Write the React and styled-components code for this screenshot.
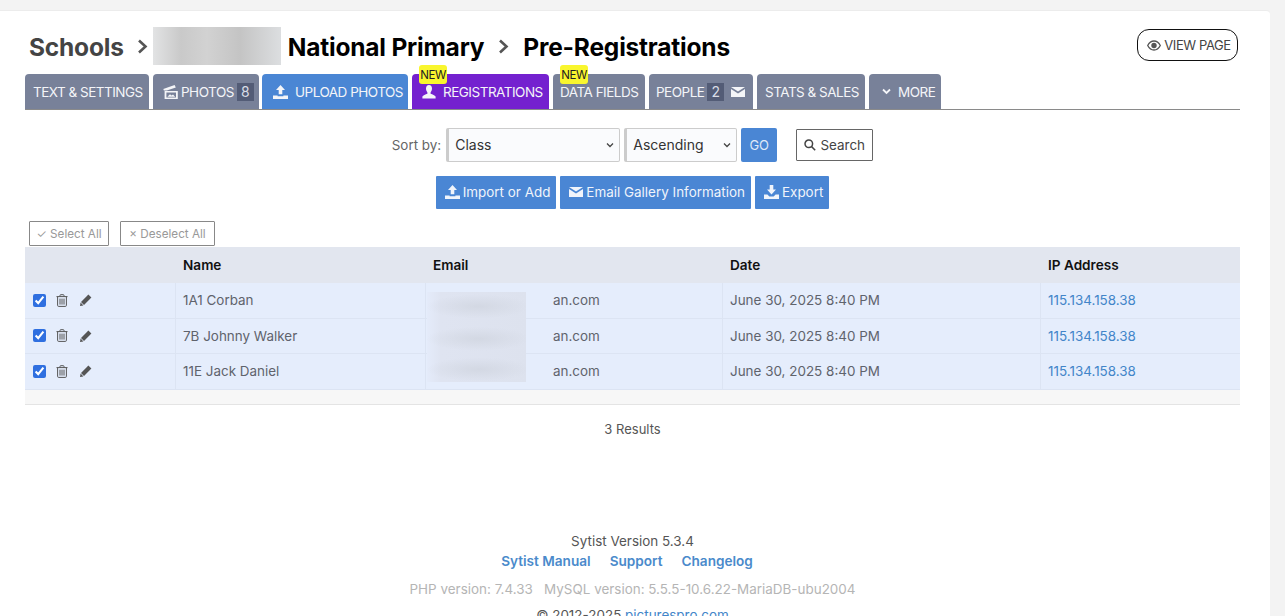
import styled, { createGlobalStyle } from 'styled-components';

const GlobalStyle = createGlobalStyle`
  html, body {
    margin: 0;
    padding: 0;
    height: 616px;
    overflow: hidden;
    background: #f3f3f3;
    font-family: Inter, "Liberation Sans", sans-serif;
    font-size: 13.45px;
    color: #555a60;
  }
`;

const UploadIcon = () => (
  <svg width="15" height="14" viewBox="0 0 15 14" fill="currentColor">
    <path d="M7.5 0 L12 5 H9.3 V9.3 H5.7 V5 H3 Z" />
    <path d="M0 10.6 H4.6 V11.2 H10.4 V10.6 H15 V14 H0 Z" />
  </svg>
);

const DownloadIcon = () => (
  <svg width="15" height="14" viewBox="0 0 15 14" fill="currentColor">
    <path d="M5.7 0 H9.3 V4.6 H12 L7.5 9.6 L3 4.6 H5.7 Z" />
    <path d="M0 9.6 H3.4 L5.4 11.4 H9.6 L11.6 9.6 H15 V14 H0 Z" />
  </svg>
);

const MailIcon = () => (
  <svg width="14" height="10" viewBox="0 0 14 10" fill="currentColor">
    <path d="M0 0 H14 L7 4.4 Z" />
    <path d="M0 2 L7 6.4 L14 2 V10 H0 Z" />
  </svg>
);

const UserIcon = () => (
  <svg width="14" height="14" viewBox="0 0 14 14" fill="currentColor">
    <path d="M7 0 C9 0 10 1.5 10 3.6 C10 5.4 9.3 6.6 8.6 7.4 V8.8 C10.5 9.6 13 10.2 13.6 11.6 V13.4 H0.4 V11.6 C1 10.2 3.5 9.6 5.4 8.8 V7.4 C4.7 6.6 4 5.4 4 3.6 C4 1.5 5 0 7 0 Z" />
  </svg>
);

const PhotosIcon = () => (
  <svg width="15" height="14" viewBox="0 0 15 14" fill="currentColor">
    <path d="M0.3 4 L11.6 0 L12.8 2.6 L3.8 5.6 H0.9 Z" />
    <path fillRule="evenodd" d="M1.6 6 H14.8 V14 H1.6 Z M3.4 7.6 V12.4 H13 V7.6 Z" />
    <path d="M4.4 11.8 L7 9.2 L8.6 10.6 L10 9.4 L12.2 11.8 Z" />
  </svg>
);

const ChevronDown = () => (
  <svg width="9" height="7" viewBox="0 0 9 7" fill="none" stroke="currentColor" strokeWidth="1.8">
    <path d="M1 1.5 L4.5 5 L8 1.5" />
  </svg>
);

const ChevronRight = () => (
  <svg width="11" height="15" viewBox="0 0 11 15" fill="none" stroke="#555" strokeWidth="2.6">
    <path d="M2 1.5 L8.5 7.5 L2 13.5" />
  </svg>
);

const EyeIcon = () => (
  <svg width="14" height="11" viewBox="0 0 14 11" fill="none" stroke="#555" strokeWidth="1.3">
    <path d="M0.7 5.5 C2.4 2.2 4.6 1 7 1 C9.4 1 11.6 2.2 13.3 5.5 C11.6 8.8 9.4 10 7 10 C4.6 10 2.4 8.8 0.7 5.5 Z" />
    <circle cx="7" cy="5.5" r="2.7" fill="#555" stroke="none" />
  </svg>
);

const SearchIcon = () => (
  <svg width="12" height="12" viewBox="0 0 12 12" fill="none" stroke="#444" strokeWidth="1.5">
    <circle cx="4.8" cy="4.8" r="3.8" />
    <path d="M7.6 7.6 L11.2 11.2" />
  </svg>
);

const TrashIcon = () => (
  <svg width="12" height="13" viewBox="0 0 12 13" fill="none" stroke="#555" strokeWidth="1">
    <path d="M0.5 2.6 H11.5" />
    <path d="M4 2.4 V1.4 Q4 0.7 4.7 0.7 H7.3 Q8 0.7 8 1.4 V2.4" />
    <path d="M1.6 2.8 V11.4 Q1.6 12.4 2.6 12.4 H9.4 Q10.4 12.4 10.4 11.4 V2.8" />
    <path d="M4 4.6 V10.6 M6 4.6 V10.6 M8 4.6 V10.6" />
  </svg>
);

const PencilIcon = () => (
  <svg width="12" height="12" viewBox="0 0 12 12" fill="#555">
    <path d="M8.4 0.6 L11.4 3.6 L4 11 L1 8 Z" />
    <path d="M0.6 8.6 L3.4 11.4 L0 12 Z" />
  </svg>
);

const tabs = [
  { label: 'TEXT & SETTINGS', width: 124, pad: 8 },
  { label: 'PHOTOS', width: 106, pad: 10, icon: <PhotosIcon />, count: 8, tight: true },
  { label: 'UPLOAD PHOTOS', width: 146, pad: 11, icon: <UploadIcon />, tone: 'blue' },
  { label: 'REGISTRATIONS', width: 137, pad: 10, icon: <UserIcon />, tone: 'purple', isNew: true },
  { label: 'DATA FIELDS', width: 92, pad: 7, isNew: true },
  { label: 'PEOPLE', width: 104, pad: 7, count: 2, after: <MailIcon /> },
  { label: 'STATS & SALES', width: 108, pad: 8 },
  { label: 'MORE', width: 72, pad: 13, icon: <ChevronDown /> },
];

const rows = [
  { name: '1A1 Corban' },
  { name: '7B Johnny Walker' },
  { name: '11E Jack Daniel' },
];

export default function App() {
  return (
    <Page>
      <GlobalStyle />
      <Card>
        <TitleRow>
          <Title>
            <Crumb>Schools</Crumb>
            <Arrow $before={13} $after={5}><ChevronRight /></Arrow>
            <Redacted />
            <TitleText>National Primary</TitleText>
            <Arrow $before={14} $after={14}><ChevronRight /></Arrow>
            <TitleText>Pre-Registrations</TitleText>
          </Title>
          <ViewPage><EyeIcon />VIEW PAGE</ViewPage>
        </TitleRow>

        <TabBar>
          {tabs.map((tab) => (
            <Tab key={tab.label} $width={tab.width} $pad={tab.pad} $tone={tab.tone} $tight={tab.tight}>
              {tab.isNew && <NewBadge>NEW</NewBadge>}
              {tab.icon}
              <TabLabel>
                {tab.label}
                {tab.count && <Count>{tab.count}</Count>}
              </TabLabel>
              {tab.after}
            </Tab>
          ))}
        </TabBar>

        <SortRow>
          <SortLabel>Sort by:</SortLabel>
          <Select $width={174} defaultValue="Class">
            <option>Class</option>
          </Select>
          <Select $width={113} defaultValue="Ascending">
            <option>Ascending</option>
          </Select>
          <GoButton>GO</GoButton>
          <SearchButton><SearchIcon />Search</SearchButton>
        </SortRow>

        <ActionRow>
          <ActionButton><UploadIcon />Import or Add</ActionButton>
          <ActionButton><MailIcon />Email Gallery Information</ActionButton>
          <ActionButton><DownloadIcon />Export</ActionButton>
        </ActionRow>

        <SelectRow>
          <SelectButton $width={80}>✓ Select All</SelectButton>
          <SelectButton $width={95}>× Deselect All</SelectButton>
        </SelectRow>

        <TableWrap>
          <Table>
            <HeadRow>
              <HeadCell />
              <HeadCell>Name</HeadCell>
              <HeadCell>Email</HeadCell>
              <HeadCell>Date</HeadCell>
              <HeadCell>IP Address</HeadCell>
            </HeadRow>
            {rows.map((row) => (
              <Row key={row.name}>
                <ToolCell>
                  <Check type="checkbox" defaultChecked />
                  <TrashIcon />
                  <PencilIcon />
                </ToolCell>
                <Cell>{row.name}</Cell>
                <EmailCell>an.com</EmailCell>
                <Cell>June 30, 2025 8:40 PM</Cell>
                <Cell><Link>115.134.158.38</Link></Cell>
              </Row>
            ))}
          </Table>
          <BlurOverlay />
        </TableWrap>
        <TableFoot />

        <Results>3 Results</Results>

        <Footer>
          <div>Sytist Version 5.3.4</div>
          <FooterLinks>
            <FooterLink>Sytist Manual</FooterLink>
            <FooterLink>Support</FooterLink>
            <FooterLink>Changelog</FooterLink>
          </FooterLinks>
          <Versions>PHP version: 7.4.33 &nbsp; MySQL version: 5.5.5-10.6.22-MariaDB-ubu2004</Versions>
          <Copyright>© 2012-2025 <Link>picturespro.com</Link></Copyright>
        </Footer>
      </Card>
    </Page>
  );
}

const Page = styled.div`
  padding: 10px 15px 0 0;
  height: 606px;
  overflow: hidden;
`;

const Card = styled.div`
  background: #ffffff;
  border-top: 1px solid #ececec;
  border-top-right-radius: 4px;
  padding: 0 30px 40px 25px;
  min-height: 640px;
`;

const TitleRow = styled.div`
  display: flex;
  justify-content: space-between;
  align-items: flex-start;
  height: 63px;
  padding-top: 16px;
  box-sizing: border-box;
`;

const Title = styled.h1`
  display: flex;
  align-items: center;
  margin: 0 0 0 4px;
  height: 38px;
  font-size: 24.5px;
  font-weight: 700;
  letter-spacing: -0.2px;
  color: #000;
`;

const TitleText = styled.span`
  padding-top: 1px;
`;

const Crumb = styled(TitleText)`
  color: #444;
`;

const Arrow = styled.span`
  display: flex;
  margin: 1px ${(p) => p.$after}px 0 ${(p) => p.$before}px;
`;

const Redacted = styled.div`
  width: 128px;
  height: 38px;
  margin-right: 7px;
  background: linear-gradient(90deg, #e2e3e4 0%, #c9c9c9 22%, #d2d2d2 42%, #c4c4c4 68%, #dcdee0 100%);
`;

const ViewPage = styled.button`
  display: flex;
  align-items: center;
  justify-content: center;
  gap: 3px;
  width: 101px;
  height: 32px;
  margin: 2px 2px 0 0;
  padding: 0 0 0 3px;
  background: #fff;
  border: 1px solid #111;
  border-radius: 12px;
  font: 13px Inter, sans-serif;
  letter-spacing: -0.4px;
  color: #444;
`;

const TabBar = styled.div`
  display: flex;
  gap: 4px;
  height: 35px;
  border-bottom: 1px solid #8a8a8a;
`;

const toneColors = { blue: '#4a86d4', purple: '#7421cf' };

const Tab = styled.div`
  position: relative;
  display: flex;
  align-items: center;
  gap: ${(p) => (p.$tight ? '3px' : '7px')};
  box-sizing: border-box;
  width: ${(p) => p.$width}px;
  height: 35px;
  margin-right: ${(p) => (p.$tight ? '-1px' : '0')};
  padding-left: ${(p) => p.$pad}px;
  background: ${(p) => toneColors[p.$tone] || '#788199'};
  border-radius: 4px 4px 0 0;
  font-size: 13.5px;
  letter-spacing: -0.5px;
  white-space: nowrap;
  color: #f4f5f8;
`;

const TabLabel = styled.span`
  display: inline-flex;
  align-items: center;
  gap: 3px;
`;

const NewBadge = styled.span`
  position: absolute;
  top: -9px;
  left: 7px;
  box-sizing: border-box;
  width: 28px;
  height: 19px;
  padding-top: 3px;
  background: #f9f62e;
  border-radius: 3px;
  text-align: center;
  font-size: 11.5px;
  line-height: 14px;
  letter-spacing: -0.4px;
  color: #222;
`;

const Count = styled.span`
  padding: 0 4px;
  background: #535c76;
  font-size: 14px;
  line-height: 18px;
  letter-spacing: 0;
  color: #d9dce6;
`;

const SortRow = styled.div`
  display: flex;
  justify-content: center;
  align-items: center;
  height: 34px;
  margin-top: 18px;
  gap: 4px;
`;

const SortLabel = styled.span`
  margin-right: 1px;
  color: #666;
`;

const Select = styled.select`
  appearance: none;
  box-sizing: border-box;
  width: ${(p) => p.$width}px;
  height: 34px;
  padding: 0 0 1px 6px;
  background: #fafbfd url("data:image/svg+xml,%3Csvg xmlns='http://www.w3.org/2000/svg' width='8' height='6' fill='none' stroke='%23444' stroke-width='1.3'%3E%3Cpath d='M1 1.5 L4 4.5 L7 1.5'/%3E%3C/svg%3E") no-repeat right 5px center;
  border: 1px solid #ccc;
  border-left: 3px solid #ccc;
  border-radius: 2px;
  font: 14px Inter, sans-serif;
  color: #333;
`;

const GoButton = styled.button`
  width: 36px;
  height: 34px;
  padding: 0;
  background: #4a86d4;
  border: 0;
  border-radius: 2px;
  font: 13px Inter, sans-serif;
  color: #dfe9f8;
`;

const SearchButton = styled.button`
  display: flex;
  align-items: center;
  justify-content: center;
  gap: 4px;
  width: 77px;
  height: 32px;
  margin-left: 15px;
  padding: 0;
  background: #fff;
  border: 1px solid #666;
  border-radius: 1px;
  font: 13.45px Inter, sans-serif;
  color: #444;
`;

const ActionRow = styled.div`
  display: flex;
  justify-content: center;
  gap: 4px;
  margin-top: 14px;
`;

const ActionButton = styled.button`
  display: flex;
  align-items: center;
  gap: 3px;
  height: 33px;
  padding: 0 6px 1px 9px;
  background: #4a86d4;
  border: 0;
  border-radius: 1px;
  font: 13.45px Inter, sans-serif;
  color: #f0f4fb;
`;

const SelectRow = styled.div`
  display: flex;
  gap: 11px;
  margin: 12px 0 1px 4px;
`;

const SelectButton = styled.button`
  width: ${(p) => p.$width}px;
  height: 25px;
  padding: 0;
  background: #fff;
  border: 1px solid #888;
  border-radius: 1px;
  font: 11.7px Inter, sans-serif;
  color: #999;
`;

const TableWrap = styled.div`
  position: relative;
`;

const Table = styled.div`
  display: grid;
  grid-template-columns: 150px 250px 297px 318px 200px;
`;

const HeadRow = styled.div`
  display: contents;
`;

const HeadCell = styled.div`
  display: flex;
  align-items: center;
  height: 36px;
  padding-left: 8px;
  background: #e2e6ef;
  font-size: 13.6px;
  font-weight: 600;
  color: #111;
`;

const Row = styled.div`
  display: contents;
`;

const Cell = styled.div`
  display: flex;
  align-items: center;
  height: 35.5px;
  padding-left: 7px;
  background: #e5edfc;
  border-left: 1px solid #dce4f3;
  border-bottom: 1px solid #dce4f3;
  box-sizing: border-box;
  color: #5f636c;
`;

const ToolCell = styled(Cell)`
  gap: 12px;
  padding-left: 8px;
  border-left: 0;
`;

const Check = styled.input`
  width: 13px;
  height: 13px;
  margin: 0 -2px 0 0;
  accent-color: #2f6fe0;
`;

const EmailCell = styled(Cell)`
  padding-left: 127px;
`;

const BlurOverlay = styled.div`
  position: absolute;
  top: 45px;
  left: 402px;
  width: 99px;
  height: 90px;
  background:
    radial-gradient(ellipse 52px 12px at 52% 16%, #d3d8e3 0%, transparent 100%),
    radial-gradient(ellipse 52px 12px at 52% 52%, #d3d8e3 0%, transparent 100%),
    radial-gradient(ellipse 52px 12px at 52% 86%, #d3d8e3 0%, transparent 100%),
    linear-gradient(90deg, #e4ebfa 0%, #dfe4f1 14%, #dde2ee 100%);
`;

const Link = styled.a`
  color: #4285c9;
`;

const TableFoot = styled.div`
  height: 14px;
  background: #f7f7f7;
  border-bottom: 1px solid #e4e4e4;
`;

const Results = styled.div`
  margin-top: 16px;
  text-align: center;
  font-size: 13px;
  color: #555;
`;

const Footer = styled.div`
  margin-top: 94px;
  text-align: center;
  line-height: 20px;
  color: #555;
`;

const FooterLinks = styled.div`
  display: flex;
  justify-content: center;
  gap: 19px;
  padding-right: 11px;
`;

const FooterLink = styled.a`
  font-size: 13.6px;
  font-weight: 600;
  color: #4a8acb;
`;

const Versions = styled.div`
  margin-top: 8px;
  color: #b5b5b5;
`;

const Copyright = styled.div`
  margin-top: 6px;
`;
